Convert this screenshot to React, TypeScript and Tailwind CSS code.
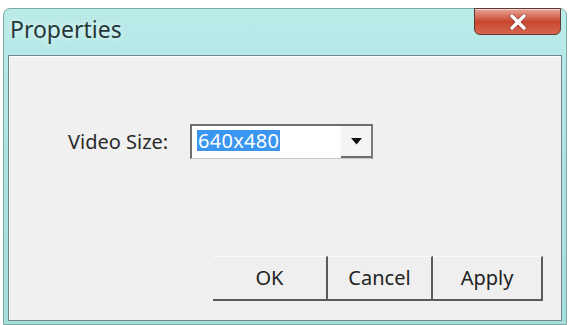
import React from "react";

export default function App() {
  return (
    <div className="w-[570px] h-[325px] bg-white pt-[8px] px-[3px] overflow-hidden" style={{ fontFamily: '"Noto Sans", "Open Sans", Arial, sans-serif' }}>
      <div className="h-[317px] flex flex-col rounded-t-[7px] border border-[#7fa9a8] bg-gradient-to-b from-[#b9ebe9] via-[#ace3e1] to-[#a6dedb] px-[4px] pb-[3px]">
        <div className="h-[46px] flex items-start justify-between shrink-0">
          <div className="pt-[5px] pl-[2px] text-[23px] leading-[30px] text-[#26393a] [text-shadow:0_0_6px_rgba(255,255,255,0.9)]">Properties</div>
          <div className="-mt-px mr-[1px] w-[87px] h-[27px] rounded-b-[6px] border border-[#5e3a34] bg-gradient-to-b from-[#e6a497] via-[#c8462f] to-[#d5664e] flex items-center justify-center shadow-[inset_0_1px_0_rgba(255,255,255,0.5)]">
            <svg width="20" height="16" viewBox="0 0 20 16">
              <path d="M4 2 L16 14 M16 2 L4 14" stroke="#6a2a22" strokeWidth="5" strokeLinecap="round" opacity="0.5" />
              <path d="M4 2 L16 14 M16 2 L4 14" stroke="#ffffff" strokeWidth="3.4" strokeLinecap="round" />
            </svg>
          </div>
        </div>
        <div className="flex-1 flex flex-col bg-[#f0f0f0] border border-[#6f8787] shadow-[inset_1px_1px_0_#ffffff]">
          <div className="flex items-center mt-[68px] ml-[59px]">
            <div className="text-[20px] leading-[26px] text-[#2a2a2a] w-[122px]">Video Size:</div>
            <div className="w-[183px] h-[35px] flex items-center bg-white border-t-2 border-l-2 border-[#6e6e6e] border-r-2 border-r-[#7a7a7a] border-b border-b-[#c8c8c8]">
              <div className="flex-1 pl-[5px]">
                <span className="bg-[#3a96f0] text-white text-[20px] leading-[21px] tracking-[0.3px] px-px inline-block">640x480</span>
              </div>
              <div className="w-[30px] h-full flex items-center justify-center bg-[#f4f4f4] border-b-2 border-[#6e6e6e]">
                <svg width="11" height="7" viewBox="0 0 11 7">
                  <path d="M0 0 H11 L5.5 6.5 Z" fill="#111" />
                </svg>
              </div>
            </div>
          </div>
          <div className="mt-auto mb-[19px] mr-[18px] flex justify-end">
            <div className="flex h-[45px]">
              <div className="w-[115px] flex items-center justify-center bg-[#efefef] border-t border-t-[#fafafa] border-r-2 border-r-[#5a5a5a] border-b-2 border-b-[#5a5a5a] text-[20px] text-[#222]">OK</div>
              <div className="w-[105px] flex items-center justify-center bg-[#efefef] border-t border-t-[#fafafa] border-r-2 border-r-[#5a5a5a] border-b-2 border-b-[#5a5a5a] text-[20px] text-[#222]">Cancel</div>
              <div className="w-[110px] flex items-center justify-center bg-[#efefef] border-t border-t-[#fafafa] border-r-2 border-r-[#5a5a5a] border-b-2 border-b-[#5a5a5a] text-[20px] text-[#222]">Apply</div>
            </div>
          </div>
        </div>
      </div>
    </div>
  );
}
